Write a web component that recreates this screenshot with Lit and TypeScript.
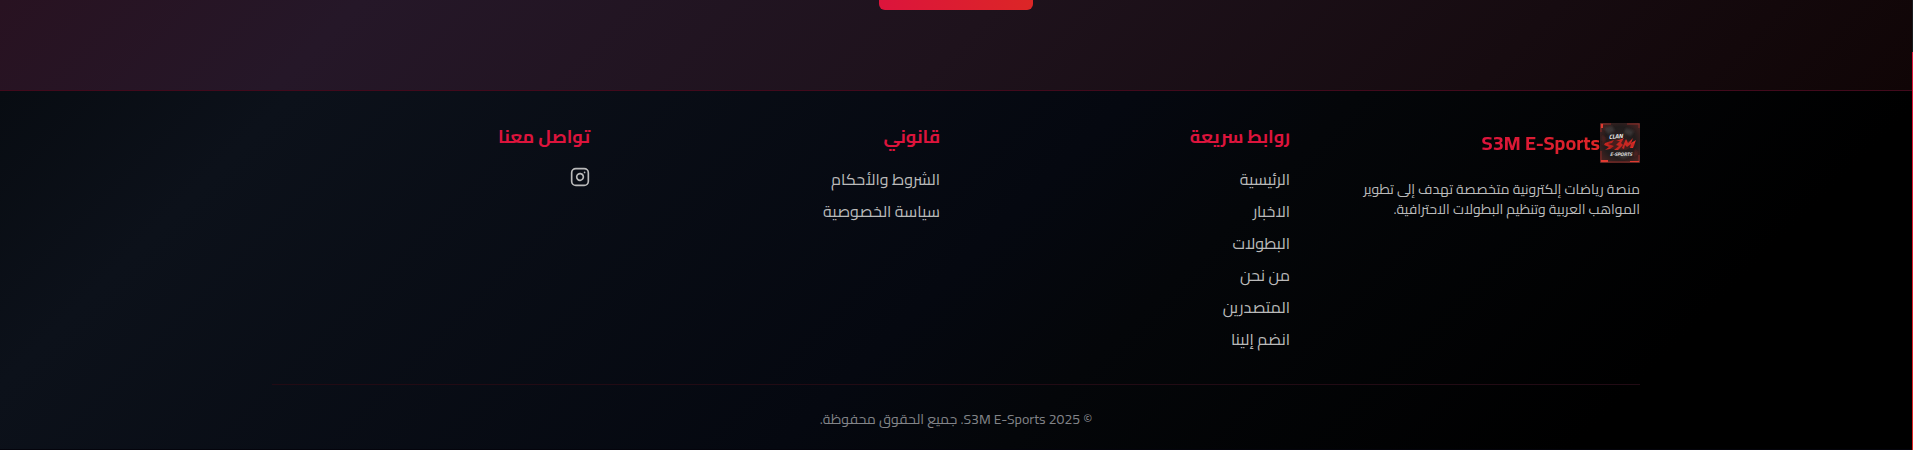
import { LitElement, html, css, svg } from "lit";
import { customElement } from "lit/decorators.js";

interface FooterLink {
  label: string;
  href: string;
}

const quickLinks: FooterLink[] = [
  { label: "الرئيسية", href: "#home" },
  { label: "الاخبار", href: "#news" },
  { label: "البطولات", href: "#tournaments" },
  { label: "من نحن", href: "#about" },
  { label: "المتصدرين", href: "#leaderboard" },
  { label: "انضم إلينا", href: "#join" },
];

const legalLinks: FooterLink[] = [
  { label: "الشروط والأحكام", href: "#terms" },
  { label: "سياسة الخصوصية", href: "#privacy" },
];

@customElement("clan-logo")
export class ClanLogo extends LitElement {
  static styles = css`
    :host {
      display: block;
      flex: none;
      direction: ltr;
    }
    .mark {
      display: block;
      width: 40px;
      height: 40px;
    }
    .word {
      font-family: Cairo, "Open Sans", sans-serif;
      font-weight: 700;
      font-style: italic;
    }
  `;

  render() {
    return html`<svg class="mark" viewBox="0 0 40 40" role="img" aria-label="S3M E-Sports">
      ${svg`
        <defs>
          <radialGradient id="smoke" cx="50%" cy="48%" r="65%">
            <stop offset="0" stop-color="#2a2020" />
            <stop offset="0.6" stop-color="#211c1c" />
            <stop offset="1" stop-color="#4a2422" />
          </radialGradient>
          <filter id="soft"><feGaussianBlur stdDeviation="0.8" /></filter>
        </defs>
        <rect width="40" height="40" fill="url(#smoke)" />
        <g filter="url(#soft)">
          <path d="M4 5 12 3 15 8 8 11Z M26 5 34 8 31 13 24 10Z M14 31 22 29 31 32 23 36Z" fill="#454040" opacity="0.7" />
          <path d="M2 12 6 15 3 24Z M35 25 38 31 34 34Z" fill="#662522" opacity="0.7" />
        </g>
        <path d="M1 9V1h10M27 1h12v4M1 28v11h38v-7" fill="none" stroke="#8a2a26" stroke-width="1" />
        <path d="M1 37h7v2H1ZM30 38h9v1h-9ZM1 1h2v4H1Z" fill="#e03a30" />
        <path d="M5 20 14 17 12 20 8 21 14 23 10 26 5 27 9 24 4 22Z" fill="#c4241f" />
        <path d="M16 18 24 15 21 20 23 22 18 27 14 27 19 23 16 22 20 18Z" fill="#d92a25" />
        <path d="M22 25 26 16 28 20 33 15 31 20 36 17 33 25 30 25 31 21 27 24 25 22 24 26Z" fill="#e32d27" />
        <path d="M8 19 16 16 30 18 36 22 26 27 10 26Z" fill="#8d1d1b" opacity="0.3" />
        <text class="word" x="9" y="16" font-size="6" fill="#eeeeee" transform="rotate(-4 9 16)">CLAN</text>
        <text class="word" x="10" y="33" font-size="5" fill="#dddddd">E-SPORTS</text>
      `}
    </svg>`;
  }
}

@customElement("app-root")
export class AppRoot extends LitElement {
  static styles = css`
    :host {
      display: flex;
      min-height: 100vh;
      direction: rtl;
      font-family: Cairo, "Noto Sans Arabic", "Noto Kufi Arabic", "Open Sans", "DejaVu Sans", sans-serif;
      font-size: 16px;
      line-height: 24px;
      color: #bababa;
      background: #04040c;
    }
    * {
      box-sizing: border-box;
    }
    .rail {
      flex: none;
      width: 1px;
      padding-top: 52px;
      background: #1a1a1e;
    }
    .thumb {
      height: 100%;
      background: linear-gradient(#dc143c, #dc2626);
    }
    .page {
      flex: 1;
      min-width: 0;
    }
    .cta {
      display: flex;
      justify-content: center;
      padding-bottom: 80px;
      background: linear-gradient(135deg, #281221 0%, #251728 18%, #1e121c 50%, #160b10 78%, #100506 100%);
    }
    .join {
      width: 154px;
      height: 10px;
      padding: 0;
      border: 0;
      border-radius: 0 0 6px 6px;
      background: linear-gradient(90deg, #dc143c, #dc2626);
      cursor: pointer;
    }
    .footer {
      border-top: 1px solid #420a1c;
      background: linear-gradient(135deg, #080c12 0%, #0c111a 13%, #050810 50%, #040609 60%, #000000 85%, #000000 100%);
    }
    .inner {
      max-width: 1400px;
      margin: 0 auto;
      padding: 32px 16px 20px;
    }
    .columns {
      display: grid;
      grid-template-columns: repeat(4, 1fr);
      gap: 32px;
    }
    .brand {
      display: flex;
      align-items: center;
      margin-bottom: 16px;
    }
    .name {
      font-size: 20px;
      line-height: 28px;
      font-weight: 700;
      color: transparent;
      background: linear-gradient(90deg, #dc143c, #dc2626);
      background-clip: text;
    }
    .about {
      margin: 0;
      font-size: 14px;
      line-height: 20px;
    }
    .title {
      margin: 0 0 16px;
      font-size: 18px;
      line-height: 28px;
      font-weight: 700;
      color: #dc143c;
    }
    .links {
      display: flex;
      flex-direction: column;
      gap: 8px;
      margin: 0;
      padding: 0;
      list-style: none;
    }
    a {
      color: inherit;
      text-decoration: none;
    }
    .social {
      display: block;
      width: 20px;
      height: 20px;
    }
    .icon {
      display: block;
      width: 20px;
      height: 20px;
    }
    .legal {
      margin: 33px 0 0;
      padding-top: 24px;
      border-top: 1px solid #220b14;
      text-align: center;
      font-size: 14px;
      line-height: 20px;
      color: #828488;
    }
    @media (max-width: 800px) {
      .columns {
        grid-template-columns: 1fr;
      }
    }
  `;

  private linkColumn(title: string, links: FooterLink[]) {
    return html`<nav aria-label=${title}>
      <h3 class="title">${title}</h3>
      <ul class="links">
        ${links.map((l) => html`<li><a href=${l.href}>${l.label}</a></li>`)}
      </ul>
    </nav>`;
  }

  render() {
    return html`
      <div class="rail"><div class="thumb"></div></div>
      <div class="page">
        <section class="cta">
          <button class="join" type="button" aria-label="انضم إلينا"></button>
        </section>
        <footer class="footer">
          <div class="inner">
            <div class="columns">
              <div>
                <div class="brand">
                  <clan-logo></clan-logo>
                  <span class="name">S3M E-Sports</span>
                </div>
                <p class="about">منصة رياضات إلكترونية متخصصة تهدف إلى تطوير المواهب العربية وتنظيم البطولات الاحترافية.</p>
              </div>
              ${this.linkColumn("روابط سريعة", quickLinks)}
              ${this.linkColumn("قانوني", legalLinks)}
              <div>
                <h3 class="title">تواصل معنا</h3>
                <a class="social" href="#instagram" aria-label="Instagram">
                  <svg class="icon" viewBox="0 0 24 24" fill="none" stroke="currentColor" stroke-width="2" stroke-linecap="round" stroke-linejoin="round">
                    <rect x="2" y="2" width="20" height="20" rx="5" />
                    <path d="M16 11.37A4 4 0 1 1 12.63 8 4 4 0 0 1 16 11.37z" />
                    <path d="M17.5 6.5h.01" />
                  </svg>
                </a>
              </div>
            </div>
            <p class="legal">© 2025 S3M E-Sports. جميع الحقوق محفوظة.</p>
          </div>
        </footer>
      </div>
    `;
  }
}
